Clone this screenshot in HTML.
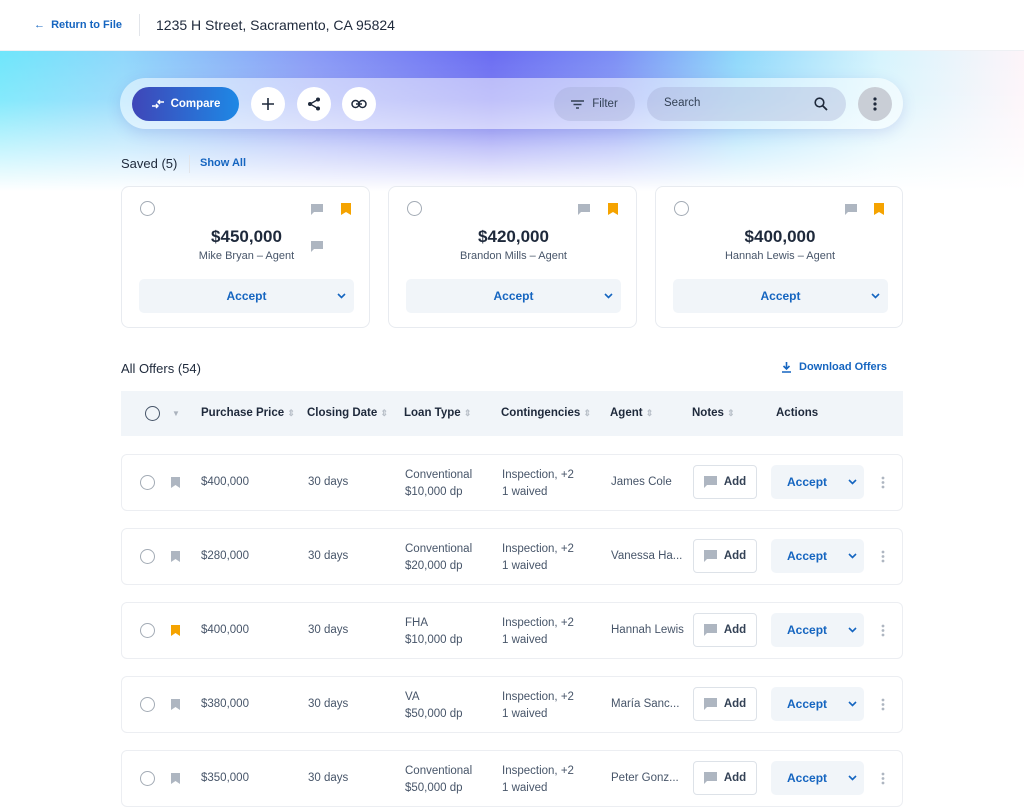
<!DOCTYPE html>
<html><head><meta charset="utf-8"><style>
*{box-sizing:border-box;margin:0;padding:0}
body{width:1024px;height:789px;overflow:hidden;font-family:"Liberation Sans",sans-serif;background:#fff;position:relative;color:#1e293b}
.abs{position:absolute}
.hdr{top:0;left:0;width:1024px;height:51px;background:#fff;border-bottom:1px solid #eef0f4}
.bg{top:51px;left:0;width:1024px;height:140px;
background:
linear-gradient(180deg,rgba(255,255,255,0) 0%,rgba(255,255,255,.15) 35%,rgba(255,255,255,1) 100%),
linear-gradient(90deg,#6fe6fb 0%,#8fd7fb 12%,#8a9cf6 30%,#6a6cf2 48%,#7c8ef5 60%,#8fd8fb 72%,#d6f4fd 86%,#fdf4f9 100%);}
.bar{left:120px;top:78px;width:783px;height:51px;border-radius:26px;background:rgba(255,255,255,.5);box-shadow:0 4px 14px rgba(90,100,200,.18)}
.circ{width:34px;height:34px;border-radius:50%;background:#fff;display:flex;align-items:center;justify-content:center}
.card{top:186px;width:249px;height:142px;border:1px solid #e8ebf0;border-radius:8px;background:#fff}
.radio{width:15px;height:15px;border:1.5px solid #a3abb5;border-radius:50%}
.acc{background:#f1f5f9;border-radius:5px;color:#1565c0;font-weight:bold;font-size:12px;display:flex;align-items:center;justify-content:center;position:absolute}
.th{top:391px;left:121px;width:782px;height:45px;background:#f1f5f9;font-size:11.5px;font-weight:bold;color:#1e293b}
.th span{position:absolute;top:16px}
.row{left:121px;width:782px;height:57px;border:1px solid #eceef2;border-radius:6px;background:#fff;font-size:11.5px;color:#475569}
.row .c{position:absolute}
.notes{position:absolute;left:571px;top:10px;width:64px;height:34px;border:1px solid #dde2e8;border-radius:4px;display:flex;align-items:center;justify-content:center;gap:7px;font-weight:bold;color:#334155}
</style></head><body>
<div class="abs hdr">
 <div class="abs" style="left:34px;top:19px;font-size:11px;font-weight:bold;color:#1565c0">&#8592;&nbsp; Return to File</div>
 <div class="abs" style="left:139px;top:14px;width:1px;height:22px;background:#e2e5ea"></div>
 <div class="abs" style="left:156px;top:17px;font-size:14px;color:#1e293b">1235 H Street, Sacramento, CA 95824</div>
</div>
<div class="abs bg"></div>
<div class="abs bar"></div>
<div class="abs" style="left:132px;top:87px;width:107px;height:34px;border-radius:17px;background:linear-gradient(90deg,#3f46b8,#1e88e5);color:#fff;font-size:11.5px;font-weight:bold;display:flex;align-items:center;justify-content:center;gap:6px">
<svg width="14" height="10" viewBox="0 0 14 10"><path d="M1 7h6M5 5l2 2-2 2M13 3H7M9 1L7 3l2 2" stroke="#fff" stroke-width="1.4" fill="none"/></svg>Compare</div>
<div class="abs circ" style="left:251px;top:87px"><svg width="12" height="12"><path d="M6 0v12M0 6h12" stroke="#1e293b" stroke-width="1.6"/></svg></div>
<div class="abs circ" style="left:297px;top:87px"><svg width="14" height="14" viewBox="0 0 14 14"><circle cx="11" cy="2.5" r="2" fill="#1e293b"/><circle cx="3" cy="7" r="2" fill="#1e293b"/><circle cx="11" cy="11.5" r="2" fill="#1e293b"/><path d="M11 2.5L3 7l8 4.5" stroke="#1e293b" stroke-width="1.3" fill="none"/></svg></div>
<div class="abs circ" style="left:342px;top:87px"><svg width="16" height="10" viewBox="0 0 16 10"><rect x="1" y="1.5" width="7" height="7" rx="3.5" stroke="#1e293b" stroke-width="1.5" fill="none"/><rect x="8" y="1.5" width="7" height="7" rx="3.5" stroke="#1e293b" stroke-width="1.5" fill="none"/><path d="M5 5h6" stroke="#1e293b" stroke-width="1.5"/></svg></div>
<div class="abs" style="left:554px;top:87px;width:81px;height:34px;border-radius:17px;background:rgba(160,170,210,.35);display:flex;align-items:center;justify-content:center;gap:8px;font-size:11.5px;color:#334155"><svg width="13" height="9"><path d="M0 1h13M2.5 4.5h8M5 8h3" stroke="#334155" stroke-width="1.4"/></svg>Filter</div>
<div class="abs" style="left:647px;top:87px;width:199px;height:34px;border-radius:17px;background:rgba(160,170,210,.35)"><span class="abs" style="left:17px;top:10px;font-size:11.5px;color:#334155">Search</span><svg class="abs" style="left:167px;top:10px" width="14" height="14"><circle cx="5.5" cy="5.5" r="4.3" stroke="#1e293b" stroke-width="1.6" fill="none"/><path d="M8.7 8.7L13 13" stroke="#1e293b" stroke-width="1.8"/></svg></div>
<div class="abs circ" style="left:858px;top:87px;background:#c9ced6"><svg width="4" height="14"><circle cx="2" cy="2" r="1.6" fill="#1e293b"/><circle cx="2" cy="7" r="1.6" fill="#1e293b"/><circle cx="2" cy="12" r="1.6" fill="#1e293b"/></svg></div>

<div class="abs" style="left:121px;top:156px;font-size:13px;color:#1e293b">Saved (5)</div>
<div class="abs" style="left:189px;top:155px;width:1px;height:18px;background:#e2e5ea"></div>
<div class="abs" style="left:200px;top:157px;font-size:11px;font-weight:bold;color:#1565c0">Show All</div>

<div class="abs card" style="left:121px">
 <div class="abs radio" style="left:18px;top:14px"></div>
 <svg class="abs" style="left:189px;top:17px" width="12" height="11"><path d="M0 0h12v8H3l-3 3z" fill="#aeb6c1"/></svg>
 <svg class="abs" style="left:219px;top:16px" width="10" height="12"><path d="M0 0h10v12L5 9 0 12z" fill="#f5a300"/></svg>
 <svg class="abs" style="left:189px;top:54px" width="12" height="11"><path d="M0 0h12v8H3l-3 3z" fill="#aeb6c1"/></svg>
 <div class="abs" style="left:0;width:249px;text-align:center;top:40px;font-size:17px;font-weight:bold;color:#1e293b">$450,000</div>
 <div class="abs" style="left:0;width:249px;text-align:center;top:63px;font-size:11px;color:#475569">Mike Bryan – Agent</div>
 <div class="acc" style="left:17px;top:92px;width:215px;height:34px">Accept<svg class="abs" style="right:8px;top:14px" width="9" height="6"><path d="M1 1l3.5 3.5L8 1" stroke="#1565c0" stroke-width="1.6" fill="none"/></svg></div>
</div>
<div class="abs card" style="left:388px">
 <div class="abs radio" style="left:18px;top:14px"></div>
 <svg class="abs" style="left:189px;top:17px" width="12" height="11"><path d="M0 0h12v8H3l-3 3z" fill="#aeb6c1"/></svg>
 <svg class="abs" style="left:219px;top:16px" width="10" height="12"><path d="M0 0h10v12L5 9 0 12z" fill="#f5a300"/></svg>
 <div class="abs" style="left:0;width:249px;text-align:center;top:40px;font-size:17px;font-weight:bold;color:#1e293b">$420,000</div>
 <div class="abs" style="left:0;width:249px;text-align:center;top:63px;font-size:11px;color:#475569">Brandon Mills – Agent</div>
 <div class="acc" style="left:17px;top:92px;width:215px;height:34px">Accept<svg class="abs" style="right:8px;top:14px" width="9" height="6"><path d="M1 1l3.5 3.5L8 1" stroke="#1565c0" stroke-width="1.6" fill="none"/></svg></div>
</div>
<div class="abs card" style="left:655px;width:248px">
 <div class="abs radio" style="left:18px;top:14px"></div>
 <svg class="abs" style="left:189px;top:17px" width="12" height="11"><path d="M0 0h12v8H3l-3 3z" fill="#aeb6c1"/></svg>
 <svg class="abs" style="left:218px;top:16px" width="10" height="12"><path d="M0 0h10v12L5 9 0 12z" fill="#f5a300"/></svg>
 <div class="abs" style="left:0;width:248px;text-align:center;top:40px;font-size:17px;font-weight:bold;color:#1e293b">$400,000</div>
 <div class="abs" style="left:0;width:248px;text-align:center;top:63px;font-size:11px;color:#475569">Hannah Lewis – Agent</div>
 <div class="acc" style="left:17px;top:92px;width:215px;height:34px">Accept<svg class="abs" style="right:8px;top:14px" width="9" height="6"><path d="M1 1l3.5 3.5L8 1" stroke="#1565c0" stroke-width="1.6" fill="none"/></svg></div>
</div>

<div class="abs" style="left:121px;top:361px;font-size:13px;color:#1e293b">All Offers (54)</div>
<div class="abs" style="left:782px;top:361px;font-size:11px;font-weight:bold;color:#1565c0;display:flex;gap:8px;align-items:center"><svg width="9" height="11"><path d="M4.5 0v7M1.5 4l3 3 3-3M0 10h9" stroke="#1565c0" stroke-width="1.6" fill="none"/></svg>Download Offers</div>

<div class="abs th">
 <div class="abs radio" style="left:24px;top:15px;width:15px;height:15px;border-color:#475569"></div>
 <span style="left:51px;color:#aab2bd;font-size:8px;top:18px">▼</span>
 <span style="left:80px">Purchase Price <i style="color:#b8bfc8;font-style:normal;font-size:9px">⇕</i></span>
 <span style="left:186px">Closing Date <i style="color:#b8bfc8;font-style:normal;font-size:9px">⇕</i></span>
 <span style="left:283px">Loan Type <i style="color:#b8bfc8;font-style:normal;font-size:9px">⇕</i></span>
 <span style="left:380px">Contingencies <i style="color:#b8bfc8;font-style:normal;font-size:9px">⇕</i></span>
 <span style="left:489px">Agent <i style="color:#b8bfc8;font-style:normal;font-size:9px">⇕</i></span>
 <span style="left:571px">Notes <i style="color:#b8bfc8;font-style:normal;font-size:9px">⇕</i></span>
 <span style="left:655px">Actions</span>
</div>

<div id="rows"></div>
<script>
var d=[["$400,000","Conventional","$10,000 dp","James Cole",0],["$280,000","Conventional","$20,000 dp","Vanessa Ha...",0],["$400,000","FHA","$10,000 dp","Hannah Lewis",1],["$380,000","VA","$50,000 dp","María Sanc...",0],["$350,000","Conventional","$50,000 dp","Peter Gonz...",0]];
var h="";d.forEach(function(r,i){var t=454+i*74;
h+='<div class="abs row" style="top:'+t+'px">'+
'<div class="abs radio" style="left:18px;top:20px"></div>'+
'<svg class="abs" style="left:49px;top:22px" width="9" height="11"><path d="M0 0h9v11L4.5 8 0 11z" fill="'+(r[4]?'#f5a300':'#aeb6c1')+'"/></svg>'+
'<div class="c" style="left:79px;top:21px">'+r[0]+'</div>'+
'<div class="c" style="left:186px;top:21px">30 days</div>'+
'<div class="c" style="left:283px;top:12px;line-height:17px">'+r[1]+'<br>'+r[2]+'</div>'+
'<div class="c" style="left:380px;top:12px;line-height:17px">Inspection, +2<br>1 waived</div>'+
'<div class="c" style="left:489px;top:21px">'+r[3]+'</div>'+
'<div class="notes"><svg width="13" height="12"><path d="M0 0h13v9H3l-3 3z" fill="#aeb6c1"/></svg>Add</div>'+
'<div class="acc" style="left:649px;top:10px;width:93px;height:34px;justify-content:flex-start;padding-left:16px">Accept<svg class="abs" style="right:7px;top:14px" width="9" height="6"><path d="M1 1l3.5 3.5L8 1" stroke="#1565c0" stroke-width="1.6" fill="none"/></svg></div>'+
'<svg class="abs" style="left:759px;top:21px" width="4" height="13"><circle cx="2" cy="2" r="1.4" fill="#aeb6c1"/><circle cx="2" cy="6.5" r="1.4" fill="#aeb6c1"/><circle cx="2" cy="11" r="1.4" fill="#aeb6c1"/></svg>'+
'</div>';});
document.getElementById("rows").innerHTML=h;
</script>
</body></html>
